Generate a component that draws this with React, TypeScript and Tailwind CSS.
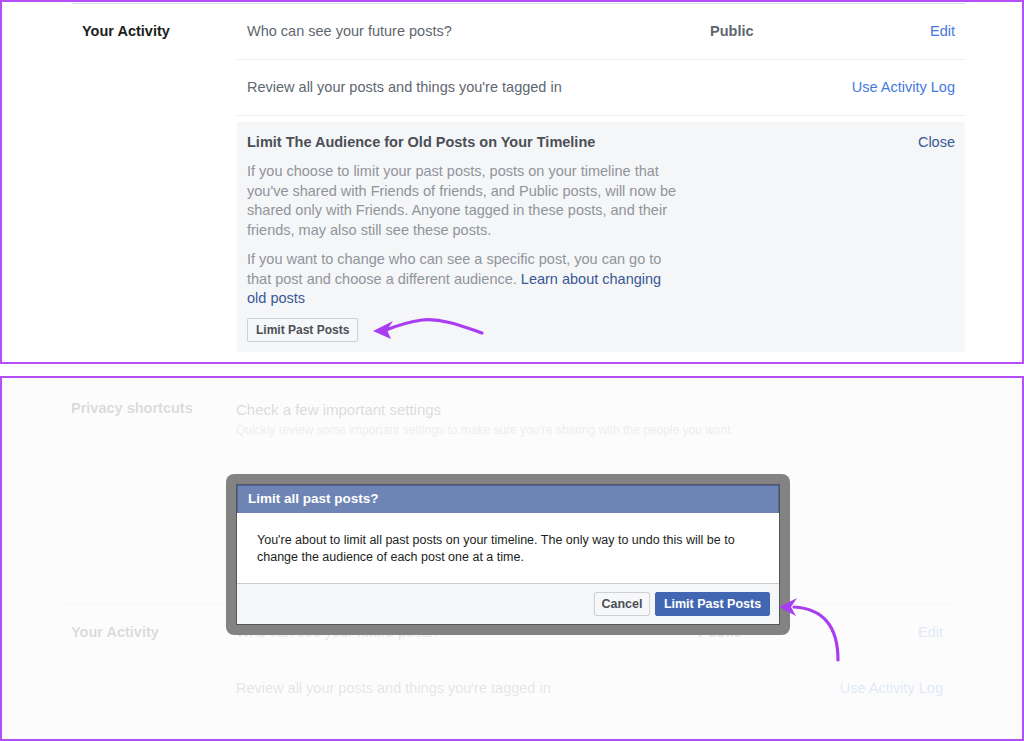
const rowText = 'text-[14.5px] text-[#606770]';
const linkBlue = 'text-[14.5px] text-[#4479df]';

function ActivityRows() {
  return (
    <>
      <div className="flex h-[56px] items-center border-b border-[#e9ebee] px-[10px]">
        <span className={`flex-1 ${rowText}`}>Who can see your future posts?</span>
        <span className="w-[185px] text-[14.5px] font-bold text-[#606770]">Public</span>
        <span className={`w-[60px] text-right ${linkBlue}`}>Edit</span>
      </div>
      <div className="flex h-[56px] items-center border-b border-[#e9ebee] px-[10px]">
        <span className={`flex-1 ${rowText}`}>
          Review all your posts and things you're tagged in
        </span>
        <span className={linkBlue}>Use Activity Log</span>
      </div>
    </>
  );
}

function LimitAudienceBox() {
  return (
    <div className="mt-[6px] bg-[#f5f6f7] px-[10px] pt-[10px] pb-[10px]">
      <div className="flex items-start justify-between">
        <h4 className="text-[14.5px] leading-[20px] font-bold text-[#4b4f56]">
          Limit The Audience for Old Posts on Your Timeline
        </h4>
        <button className="text-[14.5px] leading-[20px] text-[#385898]">Close</button>
      </div>
      <p className="mt-[10px] max-w-[450px] text-[14.5px] leading-[19.6px] text-[#90949c]">
        If you choose to limit your past posts, posts on your timeline that you've shared
        with Friends of friends, and Public posts, will now be shared only with Friends.
        Anyone tagged in these posts, and their friends, may also still see these posts.
      </p>
      <p className="mt-[10px] max-w-[430px] text-[14.5px] leading-[19.4px] text-[#90949c]">
        If you want to change who can see a specific post, you can go to that post and
        choose a different audience. <a className="text-[#385898]">Learn about changing old posts</a>
      </p>
      <button className="mt-[9px] h-[24px] rounded-[2px] border border-[#ced0d4] bg-[#f6f7f9] px-[8px] text-[12px] font-bold text-[#4b4f56]">
        Limit Past Posts
      </button>
    </div>
  );
}

function TopPanel() {
  return (
    <div className="relative h-[364px] border-2 border-[#b24ff5] bg-white">
      <div className="mt-px mr-[57px] ml-[70px] flex border-t border-[#dadde1]">
        <div className="w-[165px] pt-[17px] pl-[10px] text-[14.5px] leading-[20px] font-bold text-[#1c1e21]">
          Your Activity
        </div>
        <div className="flex-1">
          <ActivityRows />
          <LimitAudienceBox />
        </div>
      </div>

      {/* annotation arrow */}
      <svg
        className="pointer-events-none absolute top-[-2px] left-[-2px]"
        width="1024"
        height="364"
        viewBox="0 0 1024 364"
      >
        <path
          d="M482 333 C462 326 442 318 422 320 C408 322 396 326 386 330"
          fill="none"
          stroke="#a93df2"
          strokeWidth="3.2"
          strokeLinecap="round"
        />
        <path d="M373 331 L393 321 L387 330 L391 339 Z" fill="#a93df2" />
      </svg>
    </div>
  );
}

function LimitDialog() {
  return (
    <div className="absolute top-[96px] left-[224px] w-[564px] rounded-[8px] bg-[#838383] p-[10px]">
      <div className="border border-[#555]">
        <div className="flex h-[28px] items-center border border-b-0 border-[#4c66a4] bg-[#6d84b4] px-[10px] text-[13.5px] font-bold text-white">
          Limit all past posts?
        </div>
        <div className="bg-white px-[20px] pt-[19px] pb-[17px] text-[12.5px] leading-[17px] text-[#1c1e21]">
          You're about to limit all past posts on your timeline. The only way to undo this
          will be to change the audience of each post one at a time.
        </div>
        <div className="flex justify-end gap-[5px] border-t border-[#ccc] bg-[#f5f6f7] px-[9px] pt-[8px] pb-[8px]">
          <button className="h-[24px] w-[56px] rounded-[2px] border border-[#ced0d4] bg-[#f6f7f9] text-[12.5px] font-bold text-[#4b4f56]">
            Cancel
          </button>
          <button className="h-[24px] w-[115px] rounded-[2px] border border-[#4267b2] bg-[#4267b2] text-[12.5px] font-bold text-white">
            Limit Past Posts
          </button>
        </div>
      </div>
    </div>
  );
}

function BottomPanel() {
  return (
    <div className="relative h-[365px] overflow-hidden border-2 border-[#b24ff5] bg-white">
      <div className="mr-[69px] ml-[59px]">
        {/* Privacy shortcuts */}
        <div className="flex h-[227px] border-b border-[#dadde1]">
          <div className="w-[165px] pt-[20px] pl-[10px] text-[14.5px] leading-[20px] font-bold text-[#1c1e21]">
            Privacy shortcuts
          </div>
          <div className="flex-1 px-[10px] pt-[23px]">
            <div className="text-[15px] leading-[18px] text-[#1c1e21]">
              Check a few important settings
            </div>
            <div className="mt-[3px] text-[12px] leading-[16px] text-[#90949c]">
              Quickly review some important settings to make sure you're sharing with the
              people you want.
            </div>
          </div>
        </div>
        {/* Your Activity */}
        <div className="flex">
          <div className="w-[165px] pt-[17px] pl-[10px] text-[14.5px] leading-[20px] font-bold text-[#1c1e21]">
            Your Activity
          </div>
          <div className="flex-1">
            <ActivityRows />
          </div>
        </div>
      </div>

      {/* dimming layer */}
      <div className="absolute inset-0 bg-[#fcfcfc]/85" />

      <LimitDialog />

      <svg
        className="pointer-events-none absolute top-[-2px] left-[-2px]"
        width="1024"
        height="365"
        viewBox="0 376 1024 365"
      >
        <path
          d="M838 660 C838 632 828 609 794 607"
          fill="none"
          stroke="#a93df2"
          strokeWidth="3.2"
          strokeLinecap="round"
        />
        <path d="M779 607 L797 598 L791 607 L796 616 Z" fill="#a93df2" />
      </svg>
    </div>
  );
}

export default function App() {
  return (
    <div className="h-[741px] w-[1024px] overflow-hidden bg-white font-['Liberation_Sans',Arial,sans-serif]">
      <TopPanel />
      <div className="h-[12px]" />
      <BottomPanel />
    </div>
  );
}
